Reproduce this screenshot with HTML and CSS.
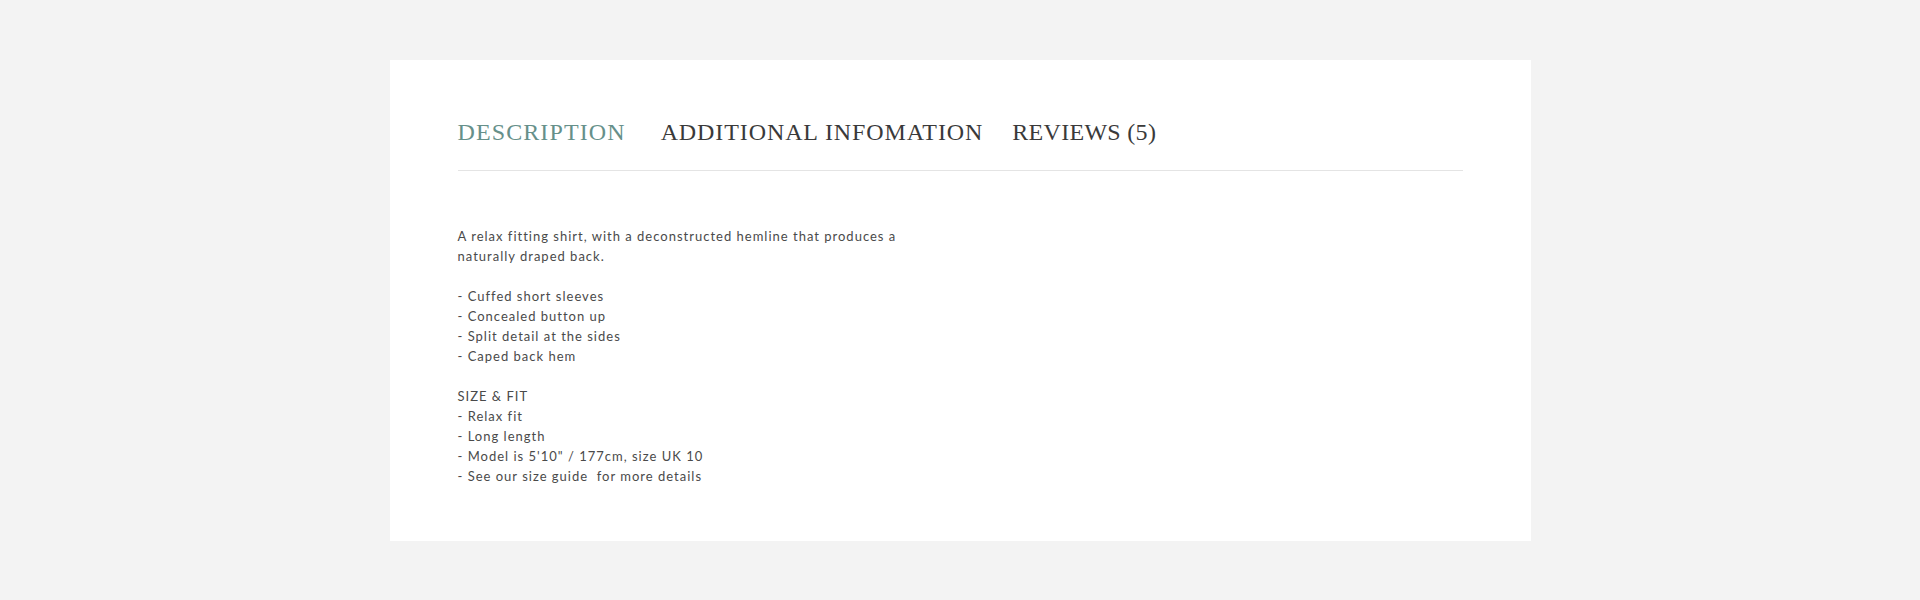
FILE: index.html
```html
<!DOCTYPE html>
<html lang="en">
<head>
<meta charset="utf-8">
<title>Product description</title>
<link rel="stylesheet" href="styles.css">
</head>
<body>
<section class="card">
  <nav class="tabs">
    <a class="tab tab-active" href="#">Description</a>
    <a class="tab tab-mid" href="#">Additional infomation</a>
    <a class="tab tab-last" href="#">Reviews (5)</a>
  </nav>
  <div class="content">
    <p class="para">A relax fitting shirt, with a deconstructed hemline that produces a naturally draped back.</p>
    <p class="para">- Cuffed short sleeves<br>- Concealed button up<br>- Split detail at the sides<br>- Caped back hem</p>
    <p class="para">SIZE &amp; FIT<br>- Relax fit<br>- Long length<br>- Model is 5'10" / 177cm, size UK 10<br>- See our size guide &nbsp;for more details</p>
  </div>
</section>
</body>
</html>
```

FILE: styles.css
```css
html, body {
  margin: 0;
  padding: 0;
}
body {
  background: #f3f3f3;
  padding-top: 60px;
  height: 540px;
}
.card {
  width: 1005px;
  margin: 0 auto;
  background: #ffffff;
  padding: 57px 68px 55px;
}
.tabs {
  display: flex;
  align-items: baseline;
  padding-bottom: 23px;
  border-bottom: 1px solid #e4e4e4;
}
.tab {
  font-family: "Liberation Serif", "Times New Roman", serif;
  font-size: 24px;
  line-height: 30px;
  letter-spacing: 0.9px;
  text-transform: uppercase;
  color: #3a3a3a;
  text-decoration: none;
}
.tab-active {
  color: #66908a;
  letter-spacing: 1.1px;
  margin-right: 35px;
}
.tab-mid {
  margin-right: 29px;
}
.tab-last {
  letter-spacing: 0.3px;
}
.content {
  margin-top: 55px;
  font-family: Lato, "Open Sans", sans-serif;
  font-size: 13px;
  line-height: 20px;
  letter-spacing: 1px;
  color: #4a4a4a;
}
.para {
  margin: 0 0 20px;
  max-width: 470px;
}
.para:last-child {
  margin-bottom: 0;
}
```
